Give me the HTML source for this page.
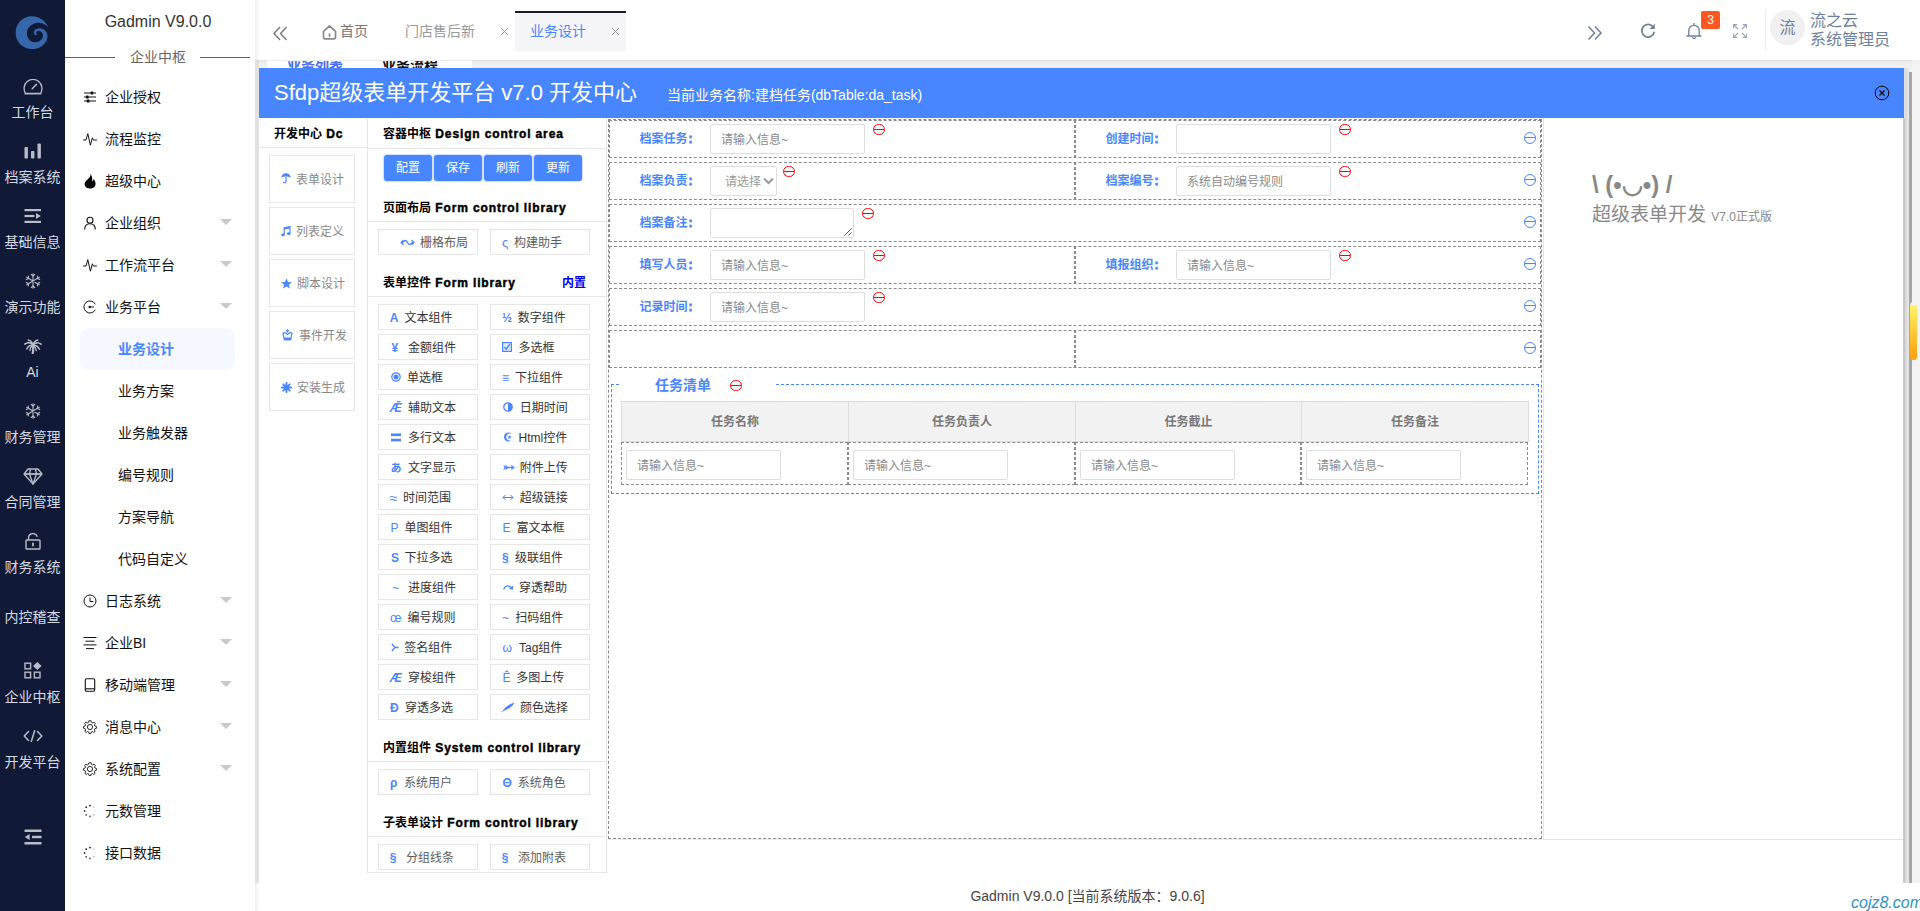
<!DOCTYPE html>
<html lang="zh-CN">
<head>
<meta charset="utf-8">
<title>Gadmin V9.0.0</title>
<style>
*{box-sizing:border-box;margin:0;padding:0}
html,body{width:1920px;height:911px;overflow:hidden;background:#fff}
body{font-family:"Liberation Sans","Noto Sans CJK SC",sans-serif;font-size:14px;color:#333;position:relative}
.abs{position:absolute}
svg{display:block}
div,span{white-space:nowrap}
/* rail */
#rail{position:absolute;left:0;top:0;width:65px;height:911px;background:#101a36}
.it{position:absolute;left:0;width:65px;text-align:center;color:#d6d9e1;font-size:14px;line-height:20px}
/* menu */
#menu{position:absolute;left:65px;top:0;width:190px;height:911px;background:#fff}
.logo{position:absolute;left:65px;top:10px;width:186px;text-align:center;font-size:16px;color:#333;line-height:24px}
.grp{position:absolute;left:65px;top:46px;width:186px;text-align:center;font-size:14px;color:#666;line-height:22px}
.ln{position:absolute;top:57px;height:1px;background:#5a5e72}
.mi{position:absolute;left:105px;font-size:14px;color:#111;line-height:20px}
.mi.sub{left:118px}
.mic{position:absolute;left:83px;width:14px;height:14px}
.arr{position:absolute;left:220px;width:0;height:0;border-left:6px solid transparent;border-right:6px solid transparent;border-top:6px solid #c9c9c9}
#sel{position:absolute;left:80px;top:328px;width:155px;height:42px;border-radius:9px;background:#f6f8ff}
/* header */
#hdr{position:absolute;left:255px;top:0;width:1665px;height:60px;background:#fff;box-shadow:0 1px 3px rgba(0,0,0,.08)}
#bg{position:absolute;left:255px;top:60px;width:1665px;height:823px;background:#f0f0f0}
#lstrip{position:absolute;left:255px;top:60px;width:4px;height:823px;background:#e1e1e1}
.tab{position:absolute;font-size:14px;line-height:20px;top:21px}
.usr{position:absolute;left:1810px;font-size:16px;line-height:20px;color:#6d7f9c}
/* sfdp */
#blue{position:absolute;left:259px;top:68px;width:1645px;height:50px;background:#4786ff}
#blue .t1{position:absolute;left:15px;top:8px;font-size:22px;line-height:34px;color:#fff}
#blue .t2{position:absolute;left:408px;top:17px;font-size:14px;line-height:20px;color:#fff}
#body{position:absolute;left:259px;top:118px;width:1644px;height:765px;background:#fff}
.hl{position:absolute;height:1px;background:#e6e6e6}
.vl{position:absolute;width:1px;background:#e6e6e6}
.hd{position:absolute;font-size:12px;line-height:16px;font-weight:bold;color:#000}
.hd b{margin-left:1px;font-weight:bold;letter-spacing:.86px;-webkit-text-stroke:.45px #000}
.dbox{position:absolute;left:269px;width:86px;height:48px;border:1px solid #e6e6e6;background:#fff}
.dbox span{position:absolute;left:27px;top:15px;font-size:12px;line-height:18px;color:#888}
.dbox svg{position:absolute}
.btn{position:absolute;top:155px;width:48px;height:26px;background:#4786ff;border-radius:3px;color:#fff;font-size:12px;line-height:26px;text-align:center;box-shadow:0 0 0 1px rgba(71,134,255,.25)}
.ib{position:absolute;width:100px;height:26px;border:1px solid #e6e6e6;background:#fff}
.ic{position:absolute;font-size:12px;line-height:26px;height:26px;top:0px;color:#4a86ff}
.tx{position:absolute;font-size:12px;line-height:26px;height:26px;top:0px;color:#555}
/* design */
#outer{position:absolute;left:608px;top:119px;width:934px;height:720px;border:1px dashed #8a8a8a}
.row{position:absolute;left:609px;width:932px;height:38px;border:1px dashed #8a8a8a}
.col{position:absolute;top:-1px;height:38px;border-left:1px dashed #8a8a8a;border-right:1px dashed #8a8a8a}
.lab{position:absolute;width:85px;text-align:right;font-size:12px;line-height:18px;font-weight:bold;color:#4a86ff}
.inp{position:absolute;width:155px;height:30px;border:1px solid #ddd;border-radius:2px;background:#fff;font-size:12px;line-height:30px;color:#8a8a8a;padding-left:10px}
.lab i{font-style:normal;-webkit-text-stroke:.8px #4a86ff;margin-left:1px;margin-right:.5px}
.rm{position:absolute;width:11.500px;height:11.500px;border:1px solid #f00;border-radius:50%;margin-top:.5px}
.rm:after{content:"";position:absolute;left:0;right:0;top:4.250px;height:1px;background:#f00}
.bm{position:absolute;width:12px;height:12px;border:1px solid #4a86ff;border-radius:50%}
.bm:after{content:"";position:absolute;left:0;right:0;top:4.500px;height:1px;background:#4a86ff}
.th{position:absolute;top:401px;height:41px;background:#f2f2f2;border:1px solid #dcdcdc;font-size:12px;font-weight:bold;color:#777;text-align:center;line-height:41px}
.td{position:absolute;top:442px;height:43px;border:1px dashed #8a8a8a}
</style>
</head>
<body>
<div id="bg"></div>
<div id="lstrip"></div>
<div id="hdr"></div>
<svg class="abs" style="left:272px;top:25px" width="16" height="16" viewBox="0 0 16 16"><path d="M8 2 L2 8.500 L8 15 M14.500 2 L8.500 8.500 L14.500 15" fill="none" stroke="#777" stroke-width="1.400"/></svg>
<svg class="abs" style="left:322px;top:24.600px" width="15" height="15" viewBox="0 0 15 15"><path d="M1.500 6.300 L7.500 1 L13.500 6.300 V12.300 A1.500 1.500 0 0 1 12 13.800 H3 A1.500 1.500 0 0 1 1.500 12.300 Z" fill="none" stroke="#8a8a8a" stroke-width="1.700" stroke-linejoin="round"/><path d="M7.500 9 V11.500" stroke="#8a8a8a" stroke-width="1.600" stroke-linecap="round"/></svg>
<div class="tab" style="left:340px;color:#777">首页</div>
<div class="tab" style="left:405px;color:#999">门店售后新</div>
<svg class="abs" style="left:500px;top:27px" width="9" height="9" viewBox="0 0 9 9"><path d="M1 1 L8 8 M8 1 L1 8" stroke="#999" stroke-width="1"/></svg>
<div class="abs" style="left:515px;top:11px;width:111px;height:40px;background:#f5f5f7;border-top:2px solid #191a23"></div>
<div class="tab" style="left:530px;color:#4a86ff">业务设计</div>
<svg class="abs" style="left:611px;top:27px" width="9" height="9" viewBox="0 0 9 9"><path d="M1 1 L8 8 M8 1 L1 8" stroke="#999" stroke-width="1"/></svg>
<svg class="abs" style="left:1587px;top:25px" width="16" height="16" viewBox="0 0 16 16"><path d="M1.500 1.500 L7.500 8 L1.500 14.500 M8 1.500 L14 8 L8 14.500" fill="none" stroke="#6d7f9c" stroke-width="1.500"/></svg>
<svg class="abs" style="left:1640px;top:23px" width="16" height="16" viewBox="0 0 16 16"><path d="M13.300 4.200 A6.300 6.300 0 1 0 14.300 8.800" fill="none" stroke="#6d7f9c" stroke-width="1.700"/><path d="M14.800 0.800 V6 H9.600 Z" fill="#6d7f9c"/></svg>
<svg class="abs" style="left:1686px;top:23px" width="16" height="17" viewBox="0 0 16 17"><path d="M1 13 H15 M2.800 13 V7.500 A5.200 5.200 0 0 1 13.200 7.500 V13" fill="none" stroke="#6d7f9c" stroke-width="1.300" stroke-linecap="round"/><path d="M6.300 14.300 A1.800 1.800 0 0 0 9.700 14.300" fill="none" stroke="#6d7f9c" stroke-width="1.200"/><path d="M8 0.500 V2.300" stroke="#6d7f9c" stroke-width="1.300" stroke-linecap="round"/></svg>
<div class="abs" style="left:1701px;top:11px;width:19px;height:18px;border-radius:2px;background:#ff5722;color:#fff;font-size:12px;line-height:18px;text-align:center">3</div>
<svg class="abs" style="left:1733px;top:24px" width="14" height="14" viewBox="0 0 14 14"><g fill="none" stroke="#93a2bb" stroke-width="1.100"><path d="M0.600 4.200 V0.600 H4.200 M0.800 0.800 L5 5 M9.800 0.600 H13.400 V4.200 M13.200 0.800 L9 5 M0.600 9.800 V13.400 H4.200 M0.800 13.200 L5 9 M13.400 9.800 V13.400 H9.800 M13.200 13.200 L9 9"/></g></svg>
<div class="abs" style="left:1765px;top:10px;width:1px;height:40px;background:#eee"></div>
<div class="abs" style="left:1770px;top:10px;width:35px;height:35px;border-radius:50%;background:#f0f0f0;color:#6d7f9c;font-size:16px;line-height:35px;text-align:center">流</div>
<div class="usr" style="top:11px">流之云</div><div class="usr" style="top:30px">系统管理员</div>
<div class="abs" style="left:267px;top:60px;width:205px;height:8px;background:#fff;overflow:hidden;border-top:1px solid #ececec"><span class="abs" style="left:20px;top:-5px;font-size:14px;line-height:18px;font-weight:bold;color:#4a6cf7">业务列表</span><span class="abs" style="left:115px;top:-5px;font-size:14px;line-height:18px;font-weight:bold;color:#111">业务流程</span></div>
<div id="body"></div>
<div id="blue"><div class="t1">Sfdp超级表单开发平台 v7.0 开发中心</div><div class="t2">当前业务名称:建档任务(dbTable:da_task)</div></div>
<div class="hd" style="left:274px;top:126px">开发中心 <b>Dc</b></div>
<div class="hl" style="left:259px;top:147px;width:108px"></div>
<div class="vl" style="left:367px;top:118px;height:755px"></div>
<div class="dbox" style="top:155px"><svg style="left:11px;top:17px" width="10" height="11" viewBox="0 0 10 11"><path d="M0.300 4.600 A4.700 4.300 0 0 1 9.700 4.600 Q5 2.400 0.300 4.600 Z" fill="#4a86ff"/><path d="M5 4 V8.800 A1.400 1.400 0 0 1 2.300 8.800" fill="none" stroke="#4a86ff" stroke-width="1.200"/></svg><span style="left:26px">表单设计</span></div>
<div class="dbox" style="top:207px"><svg style="left:11px;top:18px" width="10" height="11" viewBox="0 0 10 11"><path d="M3.200 8.500 V1.800 L9 0.600 V7.300" fill="none" stroke="#4a86ff" stroke-width="1.200"/><path d="M3.200 2.800 L9 1.600" stroke="#4a86ff" stroke-width="1.600"/><ellipse cx="1.900" cy="8.900" rx="1.800" ry="1.400" fill="#4a86ff"/><ellipse cx="7.700" cy="7.700" rx="1.800" ry="1.400" fill="#4a86ff"/></svg><span style="left:26px">列表定义</span></div>
<div class="dbox" style="top:259px"><svg style="left:11px;top:18px" width="11" height="11" viewBox="0 0 11 11"><path d="M5.500 0.300 L7 3.900 L10.900 4.200 L7.900 6.700 L8.900 10.500 L5.500 8.400 L2.100 10.500 L3.100 6.700 L0.100 4.200 L4 3.900 Z" fill="#4a86ff"/></svg><span style="left:27px">脚本设计</span></div>
<div class="dbox" style="top:311px"><svg style="left:12px;top:17px" width="11" height="12" viewBox="0 0 11 12"><path d="M5.500 0.300 V3.500 M4 1.600 H7" stroke="#4a86ff" stroke-width="1.200"/><path d="M1 4.300 C2.500 3.300 4.300 4 5.500 5.600 C6.700 4 8.500 3.300 10 4.300 L9 9 H2 Z" fill="none" stroke="#4a86ff" stroke-width="1.200" stroke-linejoin="round"/><rect x="1.600" y="9" width="7.800" height="2.400" fill="#4a86ff"/></svg><span style="left:29px">事件开发</span></div>
<div class="dbox" style="top:363px"><svg style="left:11px;top:18px" width="11" height="11" viewBox="0 0 11 11"><g stroke="#4a86ff" stroke-width="1.900" stroke-linecap="round"><path d="M5.500 0.900 V10.100 M0.900 5.500 H10.100 M2.300 2.300 L8.700 8.700 M8.700 2.300 L2.300 8.700"/></g></svg><span style="left:27px">安装生成</span></div>
<div class="hd" style="left:383px;top:126px">容器中枢 <b>Design control area</b></div>
<div class="hl" style="left:368px;top:148px;width:238px"></div>
<div class="btn" style="left:384px">配置</div>
<div class="btn" style="left:434px">保存</div>
<div class="btn" style="left:484px">刷新</div>
<div class="btn" style="left:534px">更新</div>
<div class="hd" style="left:383px;top:200px">页面布局 <b>Form control library</b></div>
<div class="hl" style="left:368px;top:221px;width:238px"></div>
<div class="hd" style="left:383px;top:275px">表单控件 <b>Form library</b></div>
<div class="hd" style="left:562px;top:275px;color:#0000ee">内置</div>
<div class="hl" style="left:368px;top:296px;width:238px"></div>
<div class="hd" style="left:383px;top:740px">内置组件 <b>System control library</b></div>
<div class="hl" style="left:368px;top:761px;width:238px"></div>
<div class="hd" style="left:383px;top:815px">子表单设计 <b>Form control library</b></div>
<div class="hl" style="left:368px;top:836px;width:238px"></div>
<div class="hl" style="left:367px;top:872px;width:240px"></div>
<div class="vl" style="left:606px;top:118px;height:755px"></div>
<div class="ib" style="left:378px;top:229px"><span class="ic" style="left:20.5px"><svg style="display:inline-block;vertical-align:middle;margin-top:-3px" width="15" height="7" viewBox="0 0 15 7"><path d="M3.500 1 L1 3.500 L3.500 6 M11.500 1 L14 3.500 L11.500 6" fill="none" stroke="#4a86ff" stroke-width="1.100"/><path d="M1.500 3.500 C3.500 3.500 4 1.500 5.500 1.500 C7.500 1.500 7.500 5.500 9.500 5.500 C11 5.500 11.500 3.500 13.500 3.500" fill="none" stroke="#4a86ff" stroke-width="1.300"/></svg></span><span class="tx" style="left:41.0px;color:#5c5c5c">栅格布局</span></div>
<div class="ib" style="left:490px;top:229px"><span class="ic" style="left:11.0px"><span style="font-size:13px">ς</span></span><span class="tx" style="left:23.0px;color:#5c5c5c">构建助手</span></div>
<div class="ib" style="left:378px;top:304px"><span class="ic" style="left:10.7px"><span style="font-weight:bold">A</span></span><span class="tx" style="left:25.5px;color:#333">文本组件</span></div>
<div class="ib" style="left:490px;top:304px"><span class="ic" style="left:11.0px"><span style="font-weight:bold">½</span></span><span class="tx" style="left:26.8px;color:#333">数字组件</span></div>
<div class="ib" style="left:378px;top:334px"><span class="ic" style="left:12.5px"><span style="font-weight:bold">¥</span></span><span class="tx" style="left:29.0px;color:#333">金额组件</span></div>
<div class="ib" style="left:490px;top:334px"><span class="ic" style="left:11.3px"><svg style="display:inline-block;vertical-align:middle;margin-top:-3px" width="10" height="10" viewBox="0 0 10 10"><rect x="0.600" y="0.600" width="8.800" height="8.800" fill="#dfe9ff" stroke="#4a86ff" stroke-width="1.200"/><path d="M2.300 5 L4.300 7.200 L7.800 2.200" fill="none" stroke="#4a86ff" stroke-width="1.400"/></svg></span><span class="tx" style="left:27.5px;color:#333">多选框</span></div>
<div class="ib" style="left:378px;top:364px"><span class="ic" style="left:11.5px"><svg style="display:inline-block;vertical-align:middle;margin-top:-3px" width="10" height="10" viewBox="0 0 10 10"><circle cx="5" cy="5" r="4.200" fill="none" stroke="#4a86ff" stroke-width="1.200"/><circle cx="5" cy="5" r="2.500" fill="#4a86ff"/></svg></span><span class="tx" style="left:28.0px;color:#333">单选框</span></div>
<div class="ib" style="left:490px;top:364px"><span class="ic" style="left:11.0px"><span style="">≡</span></span><span class="tx" style="left:24.0px;color:#333">下拉组件</span></div>
<div class="ib" style="left:378px;top:394px"><span class="ic" style="left:10.7px"><span style="font-style:italic;font-weight:bold">Ǣ</span></span><span class="tx" style="left:29.0px;color:#333">辅助文本</span></div>
<div class="ib" style="left:490px;top:394px"><span class="ic" style="left:11.5px"><svg style="display:inline-block;vertical-align:middle;margin-top:-3px" width="10" height="10" viewBox="0 0 10 10"><circle cx="5" cy="5" r="4.200" fill="none" stroke="#4a86ff" stroke-width="1.300"/><path d="M5 0.800 A4.200 4.200 0 0 1 5 9.200 Z" fill="#4a86ff"/></svg></span><span class="tx" style="left:28.8px;color:#333">日期时间</span></div>
<div class="ib" style="left:378px;top:424px"><span class="ic" style="left:12.0px"><svg style="display:inline-block;vertical-align:middle;margin-top:-3px" width="10" height="9" viewBox="0 0 10 9"><rect x="0" y="0.500" width="10" height="2.600" fill="#4a86ff"/><rect x="0" y="5.800" width="10" height="2.600" fill="#4a86ff"/></svg></span><span class="tx" style="left:29.0px;color:#333">多行文本</span></div>
<div class="ib" style="left:490px;top:424px"><span class="ic" style="left:11.5px"><svg style="display:inline-block;vertical-align:middle;margin-top:-3px" width="10" height="10" viewBox="0 0 10 10"><path d="M8.600 2 A4.400 4.400 0 1 0 8.600 8 A3.500 3.500 0 1 1 8.600 2 Z" fill="#4a86ff"/><path d="M6.500 3 L7.100 4.400 L8.600 4.500 L7.400 5.500 L7.800 7 L6.500 6.200 L5.200 7 L5.600 5.500 L4.400 4.500 L5.900 4.400 Z" fill="#4a86ff"/></svg></span><span class="tx" style="left:27.5px;color:#333">Html控件</span></div>
<div class="ib" style="left:378px;top:454px"><span class="ic" style="left:11.5px"><span style="font-weight:bold;font-size:11px">あ</span></span><span class="tx" style="left:29.0px;color:#333">文字显示</span></div>
<div class="ib" style="left:490px;top:454px"><span class="ic" style="left:11.5px"><svg style="display:inline-block;vertical-align:middle;margin-top:-3px" width="12" height="7" viewBox="0 0 12 7"><path d="M0.200 0.500 L3.600 3.500 L0.200 6.500 L1.400 3.500 Z M2.200 0.500 L5.600 3.500 L2.200 6.500 L3.400 3.500 Z" fill="#4a86ff"/><path d="M2 3.500 H9.500" stroke="#4a86ff" stroke-width="1.400"/><path d="M8.400 0.900 L11.800 3.500 L8.400 6.100 Z" fill="#4a86ff"/></svg></span><span class="tx" style="left:28.8px;color:#333">附件上传</span></div>
<div class="ib" style="left:378px;top:484px"><span class="ic" style="left:10.7px"><span style="font-size:14px">≈</span></span><span class="tx" style="left:24.0px;color:#333">时间范围</span></div>
<div class="ib" style="left:490px;top:484px"><span class="ic" style="left:11.3px"><svg style="display:inline-block;vertical-align:middle;margin-top:-3px" width="12" height="7" viewBox="0 0 12 7"><path d="M1 3.500 H11 M3.500 1 L1 3.500 L3.500 6 M8.500 1 L11 3.500 L8.500 6" fill="none" stroke="#4a86ff" stroke-width="1"/></svg></span><span class="tx" style="left:28.8px;color:#333">超级链接</span></div>
<div class="ib" style="left:378px;top:514px"><span class="ic" style="left:11.5px"><span style="">P</span></span><span class="tx" style="left:25.5px;color:#333">单图组件</span></div>
<div class="ib" style="left:490px;top:514px"><span class="ic" style="left:11.5px"><span style="">E</span></span><span class="tx" style="left:25.5px;color:#333">富文本框</span></div>
<div class="ib" style="left:378px;top:544px"><span class="ic" style="left:12.0px"><span style="font-weight:bold">S</span></span><span class="tx" style="left:25.5px;color:#333">下拉多选</span></div>
<div class="ib" style="left:490px;top:544px"><span class="ic" style="left:11.0px"><span style="font-weight:bold">§</span></span><span class="tx" style="left:24.0px;color:#333">级联组件</span></div>
<div class="ib" style="left:378px;top:574px"><span class="ic" style="left:13.0px"><span style="">~</span></span><span class="tx" style="left:29.0px;color:#333">进度组件</span></div>
<div class="ib" style="left:490px;top:574px"><span class="ic" style="left:11.5px"><svg style="display:inline-block;vertical-align:middle;margin-top:-3px" width="11" height="7" viewBox="0 0 11 7"><path d="M0.800 5.500 C1.200 2 5 0.500 8 3.500" fill="none" stroke="#4a86ff" stroke-width="1.300"/><path d="M10.300 1.500 L9.800 5.800 L5.800 4.600 Z" fill="#4a86ff"/></svg></span><span class="tx" style="left:28.0px;color:#333">穿透帮助</span></div>
<div class="ib" style="left:378px;top:604px"><span class="ic" style="left:11.0px"><span style="">œ</span></span><span class="tx" style="left:28.5px;color:#333">编号规则</span></div>
<div class="ib" style="left:490px;top:604px"><span class="ic" style="left:11.0px"><span style="">~</span></span><span class="tx" style="left:24.2px;color:#333">扫码组件</span></div>
<div class="ib" style="left:378px;top:634px"><span class="ic" style="left:11.5px"><svg style="display:inline-block;vertical-align:middle;margin-top:-3px" width="8" height="9" viewBox="0 0 8 9"><path d="M1 0.800 C1.500 2.500 3 3.500 4 4.500 C3 5.500 1.500 6.500 1 8.200 M3.500 4.500 H7.500" fill="none" stroke="#4a86ff" stroke-width="1.300"/></svg></span><span class="tx" style="left:25.2px;color:#333">签名组件</span></div>
<div class="ib" style="left:490px;top:634px"><span class="ic" style="left:11.5px"><span style="">ω</span></span><span class="tx" style="left:28.0px;color:#333">Tag组件</span></div>
<div class="ib" style="left:378px;top:664px"><span class="ic" style="left:10.7px"><span style="font-style:italic;font-weight:bold">Æ</span></span><span class="tx" style="left:29.0px;color:#333">穿梭组件</span></div>
<div class="ib" style="left:490px;top:664px"><span class="ic" style="left:11.5px"><span style="">Ê</span></span><span class="tx" style="left:25.2px;color:#333">多图上传</span></div>
<div class="ib" style="left:378px;top:694px"><span class="ic" style="left:11.0px"><span style="font-weight:bold">Ð</span></span><span class="tx" style="left:26.0px;color:#333">穿透多选</span></div>
<div class="ib" style="left:490px;top:694px"><span class="ic" style="left:11.0px"><svg style="display:inline-block;vertical-align:middle;margin-top:-3px" width="13" height="10" viewBox="0 0 13 10"><path d="M0.500 9.500 C3 5 7 2 12.500 0.500 C10.500 4.500 6.500 7.500 2.500 8.300 Z" fill="#4a86ff"/><path d="M0.300 9.800 L3 7.500" stroke="#4a86ff" stroke-width="0.900"/></svg></span><span class="tx" style="left:29.0px;color:#333">颜色选择</span></div>
<div class="ib" style="left:378px;top:769px"><span class="ic" style="left:11.0px"><span style="font-weight:bold">ρ</span></span><span class="tx" style="left:25.0px;color:#5c5c5c">系统用户</span></div>
<div class="ib" style="left:490px;top:769px"><span class="ic" style="left:11.5px"><span style="font-weight:bold">Θ</span></span><span class="tx" style="left:26.8px;color:#5c5c5c">系统角色</span></div>
<div class="ib" style="left:378px;top:844px"><span class="ic" style="left:10.7px"><span style="font-weight:bold">§</span></span><span class="tx" style="left:27.0px;color:#5c5c5c">分组线条</span></div>
<div class="ib" style="left:490px;top:844px"><span class="ic" style="left:10.7px"><span style="font-weight:bold">§</span></span><span class="tx" style="left:27.0px;color:#5c5c5c">添加附表</span></div>
<div id="outer"></div>
<div class="row" style="top:120px"><div class="col" style="left:464px;width:2px;border-right:1px dashed #8a8a8a"></div></div>
<div class="bm" style="left:1524px;top:131.5px"></div>
<div class="row" style="top:162px"><div class="col" style="left:464px;width:2px;border-right:1px dashed #8a8a8a"></div></div>
<div class="bm" style="left:1524px;top:173.5px"></div>
<div class="row" style="top:204px"></div>
<div class="bm" style="left:1524px;top:215.5px"></div>
<div class="row" style="top:246px"><div class="col" style="left:464px;width:2px;border-right:1px dashed #8a8a8a"></div></div>
<div class="bm" style="left:1524px;top:257.5px"></div>
<div class="row" style="top:288px"></div>
<div class="bm" style="left:1524px;top:299.5px"></div>
<div class="row" style="top:330px"><div class="col" style="left:464px;width:2px;border-right:1px dashed #8a8a8a"></div></div>
<div class="bm" style="left:1524px;top:341.5px"></div>
<div class="lab" style="left:608px;top:130px">档案任务<i>:</i></div>
<div class="inp" style="left:710px;top:124px">请输入信息~</div>
<div class="rm" style="left:873px;top:123px"></div>
<div class="lab" style="left:1074px;top:130px">创建时间<i>:</i></div>
<div class="inp" style="left:1176px;top:124px"></div>
<div class="rm" style="left:1339px;top:123px"></div>
<div class="lab" style="left:608px;top:172px">档案负责<i>:</i></div>
<div class="inp" style="left:710px;top:166px;width:67px;padding-left:14px;color:#999">请选择<svg class="abs" style="left:52px;top:10px" width="11" height="8" viewBox="0 0 11 8"><path d="M1 1.500 L5.500 6 L10 1.500" fill="none" stroke="#999" stroke-width="2"/></svg></div>
<div class="rm" style="left:783px;top:165px"></div>
<div class="lab" style="left:1074px;top:172px">档案编号<i>:</i></div>
<div class="inp" style="left:1176px;top:166px">系统自动编号规则</div>
<div class="rm" style="left:1339px;top:165px"></div>
<div class="lab" style="left:608px;top:214px">档案备注<i>:</i></div>
<div class="inp" style="left:710px;top:208px;width:144px;height:30px"><svg class="abs" style="right:1px;bottom:1px" width="8" height="8" viewBox="0 0 8 8"><path d="M7.500 0.500 L0.500 7.500 M7.500 4.500 L4.500 7.500" stroke="#555" stroke-width="1"/></svg></div>
<div class="rm" style="left:862px;top:207px"></div>
<div class="lab" style="left:608px;top:256px">填写人员<i>:</i></div>
<div class="inp" style="left:710px;top:250px">请输入信息~</div>
<div class="rm" style="left:873px;top:249px"></div>
<div class="lab" style="left:1074px;top:256px">填报组织<i>:</i></div>
<div class="inp" style="left:1176px;top:250px">请输入信息~</div>
<div class="rm" style="left:1339px;top:249px"></div>
<div class="lab" style="left:608px;top:298px">记录时间<i>:</i></div>
<div class="inp" style="left:710px;top:292px">请输入信息~</div>
<div class="rm" style="left:873px;top:291px"></div>
<div class="abs" style="left:611px;top:384px;width:928px;height:110px;border:1px dashed #4a86ff"></div>
<div class="abs" style="left:619px;top:383px;width:157px;height:3px;background:#fff"></div>
<div class="abs" style="left:655px;top:375px;font-size:14px;line-height:20px;font-weight:bold;color:#4a86ff">任务清单</div>
<div class="rm" style="left:730px;top:379px"></div>
<div class="th" style="left:621px;width:228px">任务名称</div>
<div class="th" style="left:848px;width:228px">任务负责人</div>
<div class="th" style="left:1075px;width:227px">任务截止</div>
<div class="th" style="left:1301px;width:228px">任务备注</div>
<div class="td" style="left:621px;width:227px"></div>
<div class="inp" style="left:626px;top:450px">请输入信息~</div>
<div class="td" style="left:848px;width:227px"></div>
<div class="inp" style="left:853px;top:450px">请输入信息~</div>
<div class="td" style="left:1075px;width:226px"></div>
<div class="inp" style="left:1080px;top:450px">请输入信息~</div>
<div class="td" style="left:1301px;width:227px"></div>
<div class="inp" style="left:1306px;top:450px">请输入信息~</div>
<div class="abs" style="left:1592px;top:170px;font-size:24px;line-height:30px;font-weight:bold;color:#888">\ (•◡•) /</div>
<div class="abs" style="left:1592px;top:202px;font-size:19px;line-height:26px;color:#888">超级表单开发 <span style="font-size:12px">V7.0正式版</span></div>
<div class="hl" style="left:607px;top:839px;width:936px;background:#ececec"></div><div class="hl" style="left:1543px;top:839px;width:360px;background:#e2e2e2"></div>
<div class="vl" style="left:1543px;top:118px;height:722px;background:#e6e6e6"></div>
<svg class="abs" style="left:1874px;top:85px" width="16" height="16" viewBox="0 0 16 16"><circle cx="8" cy="8" r="6.800" fill="none" stroke="#000" stroke-width="1"/><path d="M5.500 5.500 L10.500 10.500 M10.500 5.500 L5.500 10.500" stroke="#000" stroke-width="1.100"/></svg>
<div class="abs" style="left:1904px;top:68px;width:5px;height:815px;background:linear-gradient(90deg,#e3e3e3 0,#d8d8d8 2px,#e6e6e6 4px,#e4e4e4 5px)"></div>
<div class="abs" style="left:1902.500px;top:118px;width:2.500px;height:765px;background:linear-gradient(90deg,#d2d2d2 0,#c2c2c2 1px,#c8c8c8 2.500px)"></div>
<div class="abs" style="left:1909px;top:72px;width:3px;height:811px;background:#a6a6a6"></div>
<div class="abs" style="left:1912px;top:60px;width:8px;height:823px;background:#f3f3f3"></div>
<div class="abs" style="left:1910px;top:302px;width:7px;height:8px;border-radius:3.500px 3.500px 0 0;background:#f4f4f6"></div>
<div class="abs" style="left:1910px;top:305px;width:7px;height:55px;border-radius:0 0 3.500px 3.500px;background:linear-gradient(180deg,#fff36a 0,#ffc838 50%,#ff9d0e 100%)"></div>
<div class="abs" style="left:255px;top:883px;width:1665px;height:28px;background:#fff"></div>
<div class="abs" style="left:255px;top:886px;width:1665px;text-align:center;font-size:14px;line-height:20px;color:#444">Gadmin V9.0.0 [当前系统版本：9.0.6]</div>
<div class="abs" style="left:1851px;top:893px;font-size:16px;line-height:20px;font-style:italic;color:#2f93c0;transform:scaleY(1.060);transform-origin:0 15px">cojz8.com</div>
<div class="abs" style="left:255px;top:0;width:5px;height:60px;background:linear-gradient(90deg,#f0f0f0,#fff)"></div>
<div class="abs" style="left:255px;top:883px;width:5px;height:28px;background:linear-gradient(90deg,#f0f0f0,#fff)"></div>
<div id="rail"></div>
<svg class="abs" style="left:15px;top:16px" width="34" height="34" viewBox="0 0 34 34"><path d="M33.400 11.200 C30 4 23 -0.300 15.500 0.300 C7 1 0.500 8.500 0.600 17 C0.700 26 8 33.200 17 33.100 C25.500 33 32.600 27 32.500 20 C32.400 15.300 28.300 12 23.300 12.400 C20 12.700 18.300 15 18.900 17.200 C19.500 19.300 21.800 19.800 22.800 18.600 C21.600 18.400 20.800 17.400 21.300 16.200 C22 14.600 25 14.500 26.800 16.400 C29.400 19.200 27.500 24.500 22.500 26 C17 27.500 11.900 23.500 11.900 17.500 C11.900 11.500 17 7 23 6.800 C27 6.700 30.500 8.500 33.400 11.200 Z" fill="#3767ab"/></svg>
<div class="abs" style="left:23px;top:79px"><svg width="20" height="16" viewBox="0 0 20 16" ><path d="M2.300 13.800 A8.900 8.900 0 1 1 17.700 13.800" fill="none" stroke="#b9bcc9" stroke-width="1.300"/><path d="M1.500 14.600 H18.500" stroke="#b9bcc9" stroke-width="1.700"/><path d="M9.200 9.800 L13.600 5.300" stroke="#b9bcc9" stroke-width="1.500" stroke-linecap="round"/></svg></div>
<div class="it" style="top:102px">工作台</div>
<div class="abs" style="left:24px;top:143px"><svg width="18" height="16" viewBox="0 0 18 16" ><rect x="0.500" y="4" width="3.400" height="11.500" rx="0.800" fill="#b9bcc9"/><rect x="7" y="8" width="3.400" height="7.500" rx="0.800" fill="#b9bcc9"/><rect x="13.500" y="0.500" width="3.400" height="15" rx="0.800" fill="#b9bcc9"/></svg></div>
<div class="it" style="top:167px">档案系统</div>
<div class="abs" style="left:24px;top:208px"><svg width="18" height="16" viewBox="0 0 18 16" ><rect x="0.500" y="1" width="16.500" height="2.200" fill="#b9bcc9"/><rect x="0.500" y="6.900" width="10" height="2.200" fill="#b9bcc9"/><rect x="0.500" y="12.800" width="16.500" height="2.200" fill="#b9bcc9"/><path d="M12 5 L17 8 L12 11 Z" fill="#b9bcc9"/></svg></div>
<div class="it" style="top:232px">基础信息</div>
<div class="abs" style="left:25px;top:273px"><svg width="16" height="16" viewBox="0 0 16 16" ><g stroke="#b9bcc9" stroke-width="1.100" stroke-linecap="round" fill="none"><path d="M8 0.700 V15.300 M1.700 4.350 L14.300 11.650 M14.300 4.350 L1.700 11.650"/><path d="M6.300 1.500 L8 3.100 L9.700 1.500 M6.300 14.500 L8 12.900 L9.700 14.500 M1.300 6.600 L3.600 5.500 L3.300 3 M14.700 9.400 L12.400 10.500 L12.700 13 M14.700 6.600 L12.400 5.500 L12.700 3 M1.300 9.400 L3.600 10.500 L3.300 13"/></g></svg></div>
<div class="it" style="top:297px">演示功能</div>
<div class="abs" style="left:24px;top:339px"><svg width="18" height="15" viewBox="0 0 18 15" ><g fill="none" stroke="#b9bcc9" stroke-linecap="round"><path d="M9 6.500 C9.400 9 9.200 12 8.700 14.200" stroke-width="2.200"/><path d="M9 6 C7 3.400 3.800 3 1 5" stroke-width="1.700"/><path d="M9 6 C11 3.400 14.200 3 17 5.200" stroke-width="1.700"/><path d="M9 6 C8.400 3.600 6.600 1.600 4.200 1" stroke-width="1.500"/><path d="M9 6 C9.600 3.600 11.400 1.600 13.800 1" stroke-width="1.500"/><path d="M9 6.300 C6.400 6 4 7.400 2.800 10" stroke-width="1.500"/><path d="M9 6.300 C11.600 6 14 7.400 15.400 10.200" stroke-width="1.500"/><path d="M8.600 6.600 C7 7.600 6 9.400 6 11.400" stroke-width="1.300"/><path d="M9.400 6.600 C11 7.600 12.200 9.400 12.300 11.600" stroke-width="1.300"/></g></svg></div>
<div class="it" style="top:362px">Ai</div>
<div class="abs" style="left:25px;top:403px"><svg width="16" height="16" viewBox="0 0 16 16" ><g stroke="#b9bcc9" stroke-width="1.100" stroke-linecap="round" fill="none"><path d="M8 0.700 V15.300 M1.700 4.350 L14.300 11.650 M14.300 4.350 L1.700 11.650"/><path d="M6.300 1.500 L8 3.100 L9.700 1.500 M6.300 14.500 L8 12.900 L9.700 14.500 M1.300 6.600 L3.600 5.500 L3.300 3 M14.700 9.400 L12.400 10.500 L12.700 13 M14.700 6.600 L12.400 5.500 L12.700 3 M1.300 9.400 L3.600 10.500 L3.300 13"/></g></svg></div>
<div class="it" style="top:427px">财务管理</div>
<div class="abs" style="left:23px;top:468px"><svg width="20" height="17" viewBox="0 0 20 17" ><g fill="none" stroke="#b9bcc9" stroke-width="1.300" stroke-linejoin="round"><path d="M5 1 H15 L19 6 L10 16 L1 6 Z"/><path d="M1 6 H19" stroke-width="1.800"/><path d="M6.500 6 L10 16 L13.500 6 M6.500 6 L7.500 1 M13.500 6 L12.500 1"/></g></svg></div>
<div class="it" style="top:492px">合同管理</div>
<div class="abs" style="left:25px;top:533px"><svg width="16" height="17" viewBox="0 0 16 17" ><g fill="none" stroke="#b9bcc9" stroke-width="1.400"><rect x="1" y="7" width="14" height="9" rx="0.800"/><path d="M3.500 7 V5 A4.500 4.500 0 0 1 12.300 3.800"/></g><rect x="7.100" y="9.500" width="1.800" height="4" rx="0.900" fill="#b9bcc9"/></svg></div>
<div class="it" style="top:557px">财务系统</div>
<div class="it" style="top:607px">内控稽查</div>
<div class="abs" style="left:24px;top:662px"><svg width="18" height="17" viewBox="0 0 18 17" ><g fill="none" stroke="#b9bcc9" stroke-width="1.400"><rect x="1" y="1.200" width="5.600" height="5.600"/><rect x="1" y="10.200" width="5.600" height="5.600"/><rect x="10.400" y="10.200" width="5.600" height="5.600"/></g><path d="M13.300 0 L17.600 4 L13.300 8 L9 4 Z" fill="#b9bcc9"/></svg></div>
<div class="it" style="top:687px">企业中枢</div>
<div class="abs" style="left:23px;top:730px"><svg width="20" height="12" viewBox="0 0 20 12" ><g fill="none" stroke="#b9bcc9" stroke-width="1.500" stroke-linecap="round" stroke-linejoin="round"><path d="M5.500 1.500 L1.200 6 L5.500 10.500 M14.500 1.500 L18.800 6 L14.500 10.500 M11.600 0.800 L8.400 11.200"/></g></svg></div>
<div class="it" style="top:752px">开发平台</div>
<div class="abs" style="left:24px;top:829px"><svg width="18" height="16" viewBox="0 0 18 16" ><rect x="0.500" y="0.500" width="17" height="2.600" rx="0.600" fill="#b9bcc9"/><rect x="8" y="6.700" width="9.500" height="2.600" rx="0.600" fill="#b9bcc9"/><rect x="0.500" y="12.900" width="17" height="2.600" rx="0.600" fill="#b9bcc9"/><path d="M5.600 5 L0.800 8 L5.600 11 Z" fill="#b9bcc9"/></svg></div>
<div id="menu"></div>
<div class="logo">Gadmin V9.0.0</div>
<div class="grp">企业中枢</div>
<div class="ln" style="left:65px;width:50px"></div><div class="ln" style="left:200px;width:50px"></div>
<div id="sel"></div>
<div class="mic" style="top:90px"><svg width="14" height="14" viewBox="0 0 14 14"><g stroke="#111" stroke-width="1.200"><path d="M1 3 H13 M1 7 H13 M1 11 H13"/></g><g fill="#111"><rect x="7.600" y="1.600" width="2.600" height="2.800" rx="0.500"/><rect x="3" y="5.600" width="2.600" height="2.800" rx="0.500"/><rect x="3.800" y="9.600" width="2.600" height="2.800" rx="0.500"/></g></svg></div>
<div class="mi" style="top:87px">企业授权</div>
<div class="mic" style="top:132px"><svg width="14" height="14" viewBox="0 0 14 14"><path d="M0.500 8 H3 L4.800 1.600 L7.400 13.200 L9.400 5.800 L10.400 8 H13.500" fill="none" stroke="#111" stroke-width="1" stroke-linejoin="round" stroke-linecap="round"/></svg></div>
<div class="mi" style="top:129px">流程监控</div>
<div class="mic" style="top:174px"><svg width="14" height="15" viewBox="0 0 14 15"><path d="M7.300 0 C8 2.400 6.400 3.600 4.800 5.200 C2.900 7 1.400 8.600 1.600 10.600 C1.800 13.200 4.200 14.600 7 14.600 C10.300 14.600 12.700 12.600 12.500 9.500 C12.400 7.600 11.400 6.100 10.500 5.100 C10.400 6.300 9.900 7.100 9 7.400 C9.700 4.200 9 1.600 7.300 0 Z" fill="#000"/></svg></div>
<div class="mi" style="top:171px">超级中心</div>
<div class="mic" style="top:216px"><svg width="14" height="14" viewBox="0 0 14 14"><g fill="none" stroke="#111" stroke-width="1.100"><circle cx="7" cy="4.200" r="3"/><path d="M1.600 13.500 C1.800 10 4 7.800 7 7.800 C10 7.800 12.200 10 12.400 13.500"/></g></svg></div>
<div class="mi" style="top:213px">企业组织</div>
<div class="arr" style="top:219px"></div>
<div class="mic" style="top:258px"><svg width="14" height="14" viewBox="0 0 14 14"><path d="M0.500 8 H3 L4.800 1.600 L7.400 13.200 L9.400 5.800 L10.400 8 H13.500" fill="none" stroke="#111" stroke-width="1" stroke-linejoin="round" stroke-linecap="round"/></svg></div>
<div class="mi" style="top:255px">工作流平台</div>
<div class="arr" style="top:261px"></div>
<div class="mic" style="top:300px"><svg width="14" height="14" viewBox="0 0 14 14"><path d="M12.300 4.300 A6 6 0 1 0 12.300 9.700" fill="none" stroke="#111" stroke-width="1"/><circle cx="6.800" cy="7" r="1.300" fill="#111"/><path d="M8 7 H11" stroke="#111" stroke-width="0.9"/></svg></div>
<div class="mi" style="top:297px">业务平台</div>
<div class="arr" style="top:303px"></div>
<div class="mi sub" style="top:339px;color:#4a86ff;font-weight:bold">业务设计</div>
<div class="mi sub" style="top:381px">业务方案</div>
<div class="mi sub" style="top:423px">业务触发器</div>
<div class="mi sub" style="top:465px">编号规则</div>
<div class="mi sub" style="top:507px">方案导航</div>
<div class="mi sub" style="top:549px">代码自定义</div>
<div class="mic" style="top:594px"><svg width="14" height="14" viewBox="0 0 14 14"><g fill="none" stroke="#111" stroke-width="1"><circle cx="7" cy="7" r="6"/><path d="M7 3.500 V7.500 H10.300"/></g></svg></div>
<div class="mi" style="top:591px">日志系统</div>
<div class="arr" style="top:597px"></div>
<div class="mic" style="top:636px"><svg width="14" height="14" viewBox="0 0 14 14"><g stroke="#111" stroke-width="1"><path d="M0.500 1.500 H13.500 M2.500 5.200 H11.500 M0.500 8.900 H13.500 M3 12.600 H11"/></g></svg></div>
<div class="mi" style="top:633px">企业BI</div>
<div class="arr" style="top:639px"></div>
<div class="mic" style="top:678px"><svg width="14" height="14" viewBox="0 0 14 14"><g fill="none" stroke="#111" stroke-width="1.100"><rect x="2.300" y="0.800" width="9.400" height="12.400" rx="1.200"/><path d="M2.300 10.800 H11.700"/></g></svg></div>
<div class="mi" style="top:675px">移动端管理</div>
<div class="arr" style="top:681px"></div>
<div class="mic" style="top:720px"><svg width="14" height="14" viewBox="0 0 14 14"><g fill="none" stroke="#111" stroke-width="0.900" stroke-linejoin="round"><circle cx="7" cy="7" r="2.600"/><path d="M5.900 0.800 H8.100 L8.500 2.400 L9.600 2.900 L11.100 2.100 L12.300 3.500 L11.500 4.900 L11.900 6 L13.400 6.500 V8.300 L11.800 8.800 L11.300 9.900 L12.100 11.400 L10.700 12.500 L9.400 11.500 L8.400 11.900 L8 13.400 H6 L5.600 11.900 L4.600 11.500 L3.300 12.500 L1.900 11.400 L2.700 9.900 L2.200 8.800 L0.600 8.300 V6.500 L2.100 6 L2.500 4.900 L1.700 3.500 L2.900 2.100 L4.400 2.900 L5.500 2.400 Z"/></g></svg></div>
<div class="mi" style="top:717px">消息中心</div>
<div class="arr" style="top:723px"></div>
<div class="mic" style="top:762px"><svg width="14" height="14" viewBox="0 0 14 14"><g fill="none" stroke="#111" stroke-width="0.900" stroke-linejoin="round"><circle cx="7" cy="7" r="2.600"/><path d="M5.900 0.800 H8.100 L8.500 2.400 L9.600 2.900 L11.100 2.100 L12.300 3.500 L11.500 4.900 L11.900 6 L13.400 6.500 V8.300 L11.800 8.800 L11.300 9.900 L12.100 11.400 L10.700 12.500 L9.400 11.500 L8.400 11.900 L8 13.400 H6 L5.600 11.900 L4.600 11.500 L3.300 12.500 L1.900 11.400 L2.700 9.900 L2.200 8.800 L0.600 8.300 V6.500 L2.100 6 L2.500 4.900 L1.700 3.500 L2.900 2.100 L4.400 2.900 L5.500 2.400 Z"/></g></svg></div>
<div class="mi" style="top:759px">系统配置</div>
<div class="arr" style="top:765px"></div>
<div class="mic" style="top:804px"><svg width="14" height="14" viewBox="0 0 14 14"><g fill="#111"><circle cx="7" cy="1.600" r="0.900" opacity="1"/><circle cx="3.200" cy="3.200" r="0.900" opacity="0.900"/><circle cx="1.600" cy="7" r="0.900" opacity="0.850"/><circle cx="3.200" cy="10.800" r="0.900" opacity="0.800"/><circle cx="7" cy="12.400" r="0.900" opacity="0.700"/><circle cx="10.800" cy="10.800" r="0.800" opacity="0.350"/><circle cx="12.400" cy="7" r="0.800" opacity="0.150"/><circle cx="10.800" cy="3.200" r="0.800" opacity="0.250"/></g></svg></div>
<div class="mi" style="top:801px">元数管理</div>
<div class="mic" style="top:846px"><svg width="14" height="14" viewBox="0 0 14 14"><g fill="#111"><circle cx="7" cy="1.600" r="0.900" opacity="1"/><circle cx="3.200" cy="3.200" r="0.900" opacity="0.900"/><circle cx="1.600" cy="7" r="0.900" opacity="0.850"/><circle cx="3.200" cy="10.800" r="0.900" opacity="0.800"/><circle cx="7" cy="12.400" r="0.900" opacity="0.700"/><circle cx="10.800" cy="10.800" r="0.800" opacity="0.350"/><circle cx="12.400" cy="7" r="0.800" opacity="0.150"/><circle cx="10.800" cy="3.200" r="0.800" opacity="0.250"/></g></svg></div>
<div class="mi" style="top:843px">接口数据</div>
</body>
</html>
